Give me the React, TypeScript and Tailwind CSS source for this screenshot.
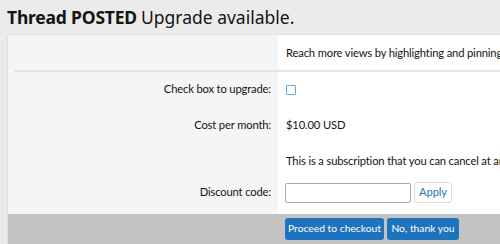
export default function App() {
  return (
    <div className="w-[500px] h-[244px] overflow-hidden bg-[#ebebeb] text-[#141414] font-['Lato',sans-serif]">
      <div className="h-[34px] pl-[7px] flex items-center text-[17.5px] font-['Noto_Sans',sans-serif]">
        <span className="font-bold tracking-[-0.2px]">Thread POSTED</span>
        <span className="ml-[4px]">Upgrade available.</span>
      </div>
      <div className="ml-[7px] w-[560px] border border-[#dedede] rounded-t-[3px] overflow-hidden text-[11.2px] tracking-[-0.15px]">
        <div className="grid grid-cols-[270px_1fr] h-[35px]">
          <div className="bg-[#f5f5f5]" />
          <div className="bg-white flex items-center pl-[8px] pt-[1px] whitespace-nowrap">
            Reach more views by highlighting and pinning your thread.
          </div>
        </div>
        <div className="bg-[#fafafa] pl-[6px]">
          <div className="h-[2px] bg-[#d9e8f6]" />
        </div>
        <div className="grid grid-cols-[270px_1fr]">
          <div className="bg-[#f5f5f5] h-[35px] flex items-center justify-end pr-[7px]">Check box to upgrade:</div>
          <div className="bg-white h-[35px] flex items-center pl-[8px]">
            <span className="w-[10px] h-[10px] border-[1.5px] border-[#5ea8e3] rounded-[1px] bg-white" />
          </div>
          <div className="bg-[#f5f5f5] h-[36px] flex items-center justify-end pr-[7px]">Cost per month:</div>
          <div className="bg-white h-[36px] flex items-center pl-[8px]">$10.00 USD</div>
          <div className="bg-[#f5f5f5] h-[36px]" />
          <div className="bg-white h-[36px] flex items-center pl-[8px] whitespace-nowrap">
            This is a subscription that you can cancel at any time.
          </div>
          <div className="bg-[#f5f5f5] h-[35px] pb-[8px] flex items-center justify-end pr-[7px]">Discount code:</div>
          <div className="bg-white h-[35px] pb-[8px] flex items-center pl-[7px] gap-[3px]">
            <input className="w-[126px] h-[20px] border border-[#a9a9a9] rounded-[2px] bg-white outline-none" />
            <button className="w-[38px] h-[21px] border border-[#dcdcdc] rounded-[3px] bg-white text-[#2577b1]">
              Apply
            </button>
          </div>
        </div>
        <div className="h-[30px] bg-[#c3c3c3] flex items-center pl-[277px] gap-[3px] text-[10.3px] tracking-normal">
          <button className="w-[99px] h-[22px] rounded-[3px] bg-[#1e73be] text-white whitespace-nowrap">Proceed to checkout</button>
          <button className="w-[72px] h-[22px] rounded-[3px] bg-[#1e73be] text-white whitespace-nowrap">No, thank you</button>
        </div>
      </div>
    </div>
  );
}
